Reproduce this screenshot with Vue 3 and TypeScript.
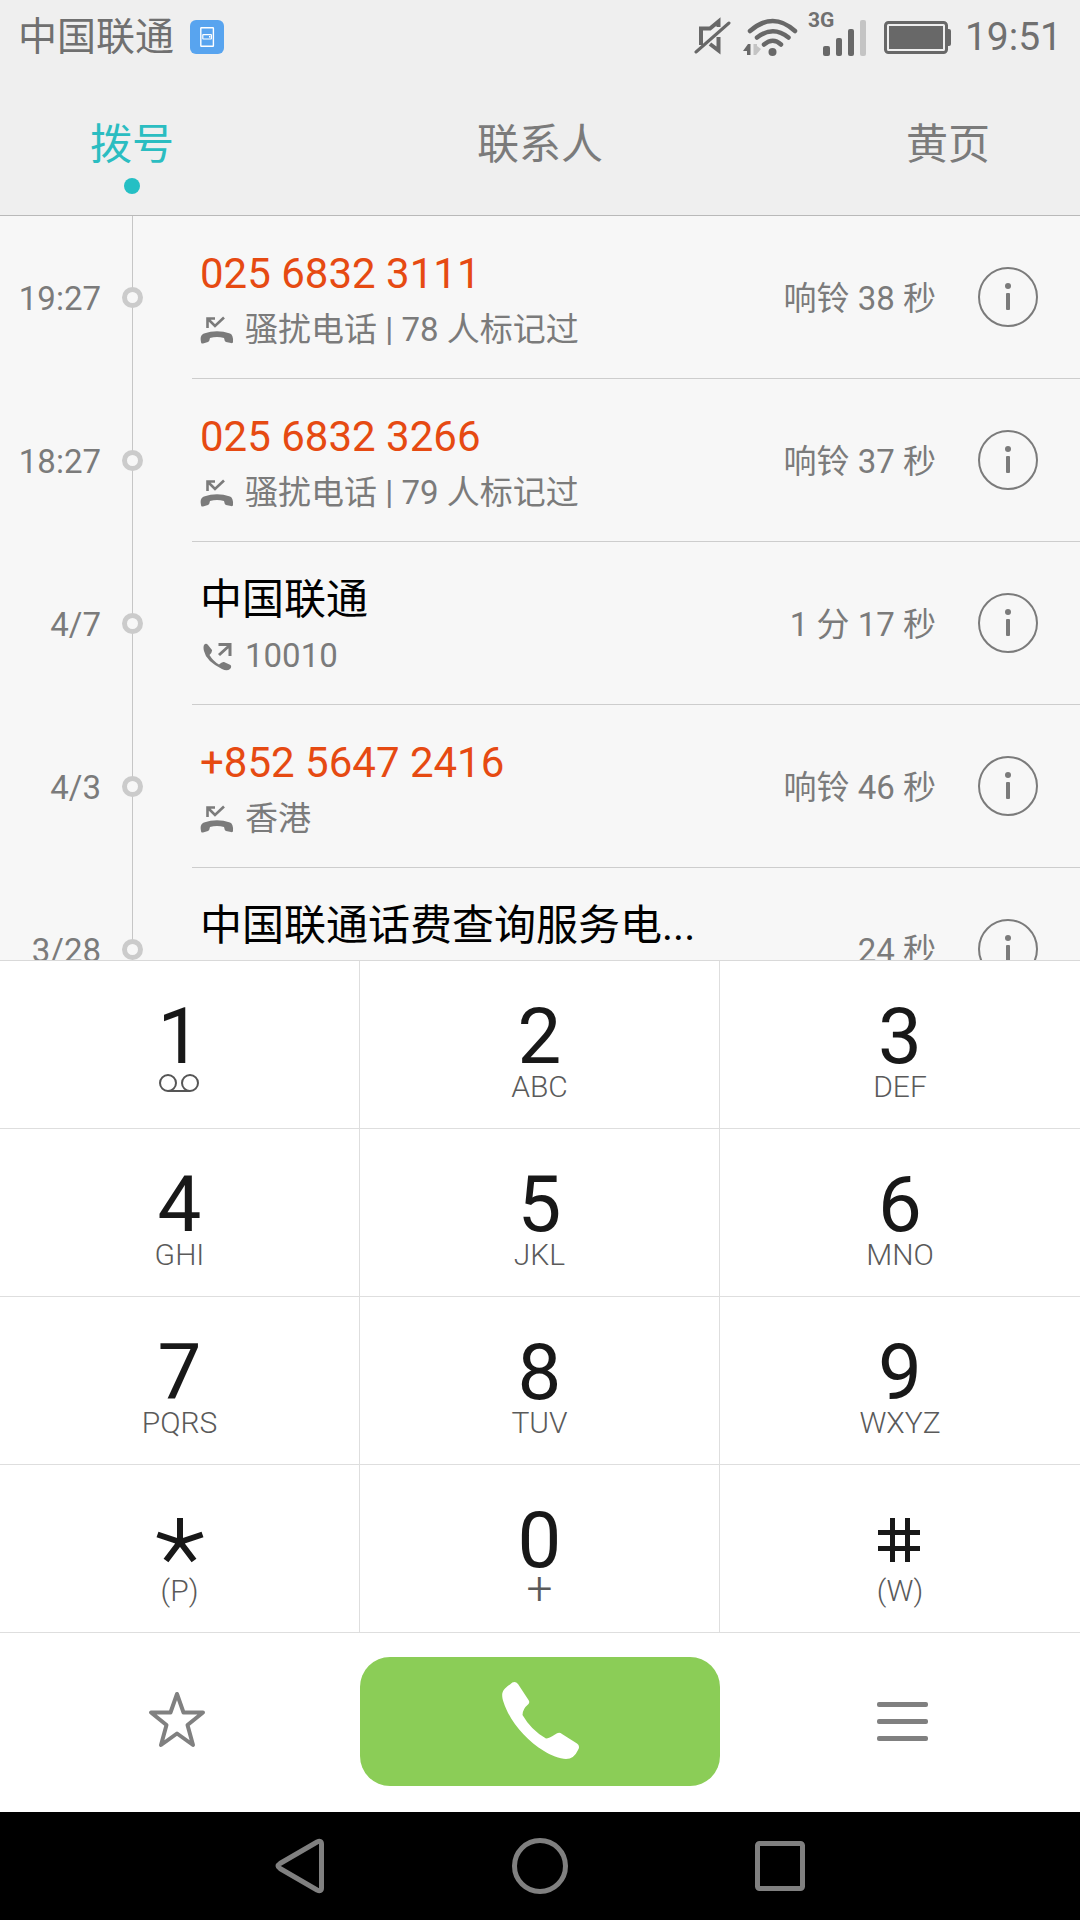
<script setup lang="ts">
interface Tab { id: string; label: string }
interface Call {
  when: string
  title: string
  detail: string
  duration: string
  kind: 'missed' | 'outgoing'
  alert: boolean
}
interface Key { digit: string; label: string; name: string }

const tabs: Tab[] = [
  { id: 'dial', label: '拨号' },
  { id: 'contacts', label: '联系人' },
  { id: 'pages', label: '黄页' },
]
const activeTab = 'dial'

const calls: Call[] = [
  { when: '19:27', title: '025 6832 3111', detail: '骚扰电话 | 78 人标记过', duration: '响铃 38 秒', kind: 'missed', alert: true },
  { when: '18:27', title: '025 6832 3266', detail: '骚扰电话 | 79 人标记过', duration: '响铃 37 秒', kind: 'missed', alert: true },
  { when: '4/7', title: '中国联通', detail: '10010', duration: '1 分 17 秒', kind: 'outgoing', alert: false },
  { when: '4/3', title: '+852 5647 2416', detail: '香港', duration: '响铃 46 秒', kind: 'missed', alert: true },
  { when: '3/28', title: '中国联通话费查询服务电...', detail: '', duration: '24 秒', kind: 'outgoing', alert: false },
]

const keys: Key[] = [
  { digit: '1', label: '', name: '1' },
  { digit: '2', label: 'ABC', name: '2' },
  { digit: '3', label: 'DEF', name: '3' },
  { digit: '4', label: 'GHI', name: '4' },
  { digit: '5', label: 'JKL', name: '5' },
  { digit: '6', label: 'MNO', name: '6' },
  { digit: '7', label: 'PQRS', name: '7' },
  { digit: '8', label: 'TUV', name: '8' },
  { digit: '9', label: 'WXYZ', name: '9' },
  { digit: '*', label: '(P)', name: '星号' },
  { digit: '0', label: '+', name: '0' },
  { digit: '#', label: '(W)', name: '井号' },
]
</script>

<template>
  <div class="phone">
    <header class="top">
      <div class="status">
        <span>中国联通</span>
        <svg class="app-badge" width="34" height="34" viewBox="0 0 34 34">
          <rect width="34" height="34" rx="6" fill="#58a4ef" />
          <rect x="10.8" y="7.8" width="12.6" height="18.4" rx="0.5" fill="none" stroke="#fff" stroke-width="1.4" />
          <rect x="12.8" y="14.6" width="8.6" height="4.4" rx="0.5" fill="none" stroke="#fff" stroke-width="1.2" />
          <rect x="19" y="16" width="1.4" height="1.6" fill="#fff" />
        </svg>
        <div class="signals">
          <svg width="37" height="40" viewBox="0 0 37 40" fill="none" stroke="#686868" stroke-width="4">
            <path d="M7 28V11.500H16L24.500 4.500V10" />
            <path d="M24.500 20V33.500L16 27" />
            <path d="M2 35L35 6" stroke-width="3" stroke-linecap="round" />
          </svg>
          <svg class="wifi" width="56" height="40" viewBox="0 0 56 40" fill="none" stroke="#686868" stroke-width="4.500" stroke-linecap="round">
            <path d="M7 14Q30 -6 52 14" />
            <path d="M14 20.500Q30 8 45.500 20.500" />
            <path d="M21 27.500Q30 20 38 27.500" />
            <circle cx="29.500" cy="35" r="4" fill="#686868" stroke="none" />
            <path d="M0 34L5 27H7.500V38H4V34Z" fill="#686868" stroke="none" />
            <path d="M10.500 27H14V29L18 32L13 38H10.500Z" fill="#c4c4c4" stroke="none" />
          </svg>
          <div class="cell">
            <span class="net">3G</span>
            <svg width="44" height="38" viewBox="0 0 44 38" fill="#686868">
              <rect y="28" width="7" height="10" rx="2" />
              <rect x="13" y="20" width="6" height="18" rx="2" />
              <rect x="25" y="11" width="6" height="27" rx="2" />
              <rect x="37" y="2" width="6" height="36" rx="2" fill="#c4c4c4" />
            </svg>
          </div>
          <svg class="battery" width="67" height="33" viewBox="0 0 67 33" fill="#686868">
            <rect x="1.500" y="1.500" width="61" height="30" rx="3" fill="none" stroke="#686868" stroke-width="3" />
            <rect x="5" y="5" width="54" height="23" />
            <path d="M63 8H65Q67 8 67 10V23Q67 25 65 25H63Z" />
          </svg>
          <span>19:51</span>
        </div>
      </div>
      <nav class="tabs">
        <button v-for="t in tabs" :key="t.id" type="button" :class="['tab', { active: t.id === activeTab }]">
          {{ t.label }}
          <span class="tab-dot"></span>
        </button>
      </nav>
    </header>

    <main class="log">
      <article v-for="c in calls" :key="c.when" class="call">
        <time class="when">{{ c.when }}</time>
        <div class="rail"><span class="node"></span></div>
        <div class="entry">
          <div class="who">
            <div :class="['title', { alert: c.alert }]">{{ c.title }}</div>
            <div class="detail">
              <svg v-if="c.kind === 'missed'" width="34" height="30" viewBox="0 0 34 30">
                <path d="M1 27C0 22 1 20 4 18.500Q17 14 30 18.500Q33.500 20 33 27Q33 28.500 31 28L26 27Q24.500 26.500 24 23Q17 21 10 23Q9.500 26.500 8 27L3 28.500Q1 29 1 27Z" fill="#7b7b7b" />
                <path d="M7.500 13V3.500H15M8 4L15 11L24 2.500" fill="none" stroke="#7b7b7b" stroke-width="2.600" />
              </svg>
              <svg v-else width="34" height="30" viewBox="0 0 34 30">
                <path d="M4 4Q6 1.500 8 4L12 9Q12.500 11 9.500 14Q13 20 19 23.500Q22 20.500 24 21L30.500 24Q32 26 30 28Q27 30.500 22 28Q6 20 4 10Q3 6 4 4Z" fill="#7b7b7b" />
                <path d="M19 14L29.500 4.500M18.500 3.500H30V15" fill="none" stroke="#7b7b7b" stroke-width="3" />
              </svg>
              <span>{{ c.detail }}</span>
            </div>
          </div>
          <span class="duration">{{ c.duration }}</span>
          <button type="button" class="info" aria-label="详情">
            <svg width="60" height="60" viewBox="0 0 60 60">
              <circle cx="30" cy="30" r="29" fill="none" stroke="#7b7b7b" stroke-width="2" />
              <circle cx="30" cy="19" r="3" fill="#7b7b7b" />
              <rect x="28" y="26" width="4" height="17" rx="1" fill="#7b7b7b" />
            </svg>
          </button>
        </div>
      </article>
    </main>

    <section class="keypad">
      <button v-for="k in keys" :key="k.digit" type="button" class="key" :aria-label="k.name">
        <span class="digit">
          <svg v-if="k.digit === '*'" width="48" height="48" viewBox="0 0 48 48" stroke="#181818" stroke-width="6">
            <path d="M24 1V25M24 25L1.500 17.500M24 25L46.500 17.500M24 25L10 43.500M24 25L38 43.500" />
          </svg>
          <svg v-else-if="k.digit === '#'" width="48" height="48" viewBox="0 0 48 48" stroke="#181818" stroke-width="5">
            <path d="M16.500 1V45M31.500 1V45M2 15.500H44M2 31.500H44" />
          </svg>
          <template v-else>{{ k.digit }}</template>
        </span>
        <span :class="['letters', { plus: k.label === '+' }]">
          <svg v-if="k.digit === '1'" class="voicemail" width="40" height="24" viewBox="0 0 40 24" fill="none" stroke="#555" stroke-width="2">
            <circle cx="8" cy="8" r="8" />
            <circle cx="30" cy="8" r="8" />
            <path d="M8 16H30" />
          </svg>
          <template v-else>{{ k.label }}</template>
        </span>
      </button>
    </section>

    <section class="actions">
      <button type="button" class="side" aria-label="收藏">
        <svg width="64" height="64" viewBox="0 0 64 64" fill="none" stroke="#808080" stroke-width="4" stroke-linejoin="round">
          <path d="M29 4L35.500 22.500H55L39.500 35L45 55L29 43.500L13 55L18.500 35L3 22.500H22.500Z" />
        </svg>
      </button>
      <button type="button" class="dial" aria-label="拨打">
        <svg width="80" height="84" viewBox="0 0 80 84" fill="#fff">
          <path d="M10 4.500Q14.500 0 18 4L28.500 20Q30 22 28.500 24Q22.500 29 22.500 35Q31 50 46 58.500Q49 58.500 55 54.500Q59 51.500 62 54L77 63.500Q80.500 66 78 70Q74 79 66 79C60 79 50 75 44 71C26 60 10 42 3.500 22C1 14 1.500 10 10 4.500Z" />
        </svg>
      </button>
      <button type="button" class="side" aria-label="菜单">
        <svg width="56" height="42" viewBox="0 0 56 42" fill="#808080">
          <rect x="5" y="1" width="51" height="5" rx="2" />
          <rect x="5" y="18" width="51" height="5" rx="2" />
          <rect x="5" y="35" width="51" height="5" rx="2" />
        </svg>
      </button>
    </section>

    <nav class="system">
      <button type="button" aria-label="返回">
        <svg width="60" height="60" viewBox="0 0 60 60"><path d="M10 27.500L47 6Q51.500 4 51.500 8V52Q51.500 56 47 54L10 32.500Q6 30 10 27.500Z" /></svg>
      </button>
      <button type="button" aria-label="主屏幕">
        <svg width="60" height="60" viewBox="0 0 60 60"><circle cx="30" cy="30" r="25.500" /></svg>
      </button>
      <button type="button" aria-label="最近任务">
        <svg width="60" height="60" viewBox="0 0 60 60"><rect x="7.500" y="7.500" width="45" height="45" rx="2" /></svg>
      </button>
    </nav>
  </div>
</template>

<style>
body {
  margin: 0;
}
</style>

<style scoped>
.phone {
  display: flex;
  flex-direction: column;
  height: 100vh;
  overflow: hidden;
  background: #f7f7f7;
  color: #7b7b7b;
  font-family: Roboto, "Noto Sans CJK SC", sans-serif;
}
button {
  margin: 0;
  padding: 0;
  border: 0;
  background: none;
  color: inherit;
  font: inherit;
}
svg {
  display: block;
  flex: none;
}
.top {
  flex: none;
  background: #efefef;
  border-bottom: 1px solid #b9b9b9;
}
.status {
  display: flex;
  align-items: center;
  height: 74px;
  padding: 0 18px;
  color: #707070;
  font-size: 39px;
  line-height: 74px;
}
.app-badge {
  margin-left: 16px;
}
.signals {
  display: flex;
  align-items: center;
  margin-left: auto;
}
.wifi {
  margin-left: 12px;
}
.cell {
  display: flex;
  position: relative;
  margin-left: 24px;
}
.net {
  position: absolute;
  left: -15px;
  top: -8px;
  font-size: 21px;
  line-height: 20px;
  font-weight: 700;
}
.battery {
  margin: 0 14px 0 17px;
}
.tabs {
  display: flex;
  justify-content: space-between;
  padding: 0 90px;
}
.tab {
  display: flex;
  flex-direction: column;
  align-items: center;
  height: 141px;
  padding-top: 43px;
  gap: 5px;
  box-sizing: border-box;
  font-size: 42px;
  line-height: 56px;
}
.tab-dot {
  width: 16px;
  height: 16px;
  border-radius: 50%;
}
.active {
  color: #2bbdc1;
}
.active .tab-dot {
  background: #25bfc4;
}
.log {
  flex: 1 1 0;
  min-height: 0;
  overflow: hidden;
}
.call {
  display: flex;
}
.when {
  width: 101px;
  flex: none;
  align-self: center;
  padding-top: 3px;
  text-align: right;
  font-size: 33px;
  line-height: 40px;
}
.rail {
  display: flex;
  flex: none;
  align-items: center;
  justify-content: center;
  width: 63px;
  background: linear-gradient(#c6c6c6, #c6c6c6) center / 1px 100% no-repeat;
}
.node {
  box-sizing: border-box;
  width: 21px;
  height: 21px;
  border: 5px solid #cbcbcb;
  border-radius: 50%;
  background: #f7f7f7;
}
.entry {
  display: flex;
  flex: 1;
  align-items: center;
  min-width: 0;
  margin-left: 28px;
  padding: 0 42px 0 8px;
  border-bottom: 1px solid #cdcdcd;
}
.who {
  flex: 1;
  min-width: 0;
  padding: 30px 0 20px;
  white-space: nowrap;
}
.title {
  color: #000;
  font-size: 42px;
  line-height: 56px;
}
.alert {
  color: #e64a12;
}
.detail {
  display: flex;
  align-items: center;
  height: 56px;
  gap: 11px;
  font-size: 33px;
  line-height: 56px;
}
.duration {
  padding-top: 3px;
  font-size: 33px;
  line-height: 40px;
  white-space: nowrap;
}
.info {
  margin-left: 42px;
}
.keypad {
  display: grid;
  flex: none;
  grid-template-columns: repeat(3, 1fr);
  border-top: 1px solid #d9d9d9;
  background: #fff;
}
.key {
  display: flex;
  flex-direction: column;
  align-items: center;
  height: 168px;
  padding-top: 37px;
  box-sizing: border-box;
  border-right: 1px solid #dedede;
  border-bottom: 1px solid #dedede;
}
.key:nth-child(3n) {
  border-right: 0;
}
.digit {
  display: flex;
  align-items: center;
  height: 77px;
  color: #181818;
  font-size: 78px;
  line-height: 78px;
}
.letters {
  display: flex;
  align-items: center;
  height: 24px;
  color: #5a5a5a;
  font-size: 30px;
  line-height: 24px;
  font-weight: 300;
}
.voicemail {
  overflow: visible;
}
.plus {
  height: 18px;
  font-size: 46px;
}
.actions {
  display: grid;
  flex: none;
  grid-template-columns: repeat(3, 1fr);
  align-items: center;
  padding: 24px 0 26px;
  background: #fff;
}
.side {
  display: flex;
  justify-content: center;
}
.dial {
  display: flex;
  align-items: center;
  justify-content: center;
  height: 129px;
  border-radius: 30px;
  background: #8bcd57;
}
.system {
  display: flex;
  flex: none;
  justify-content: center;
  gap: 180px;
  padding: 24px 0;
  background: #000;
}
.system svg {
  fill: none;
  stroke: #808080;
  stroke-width: 5;
}
</style>
